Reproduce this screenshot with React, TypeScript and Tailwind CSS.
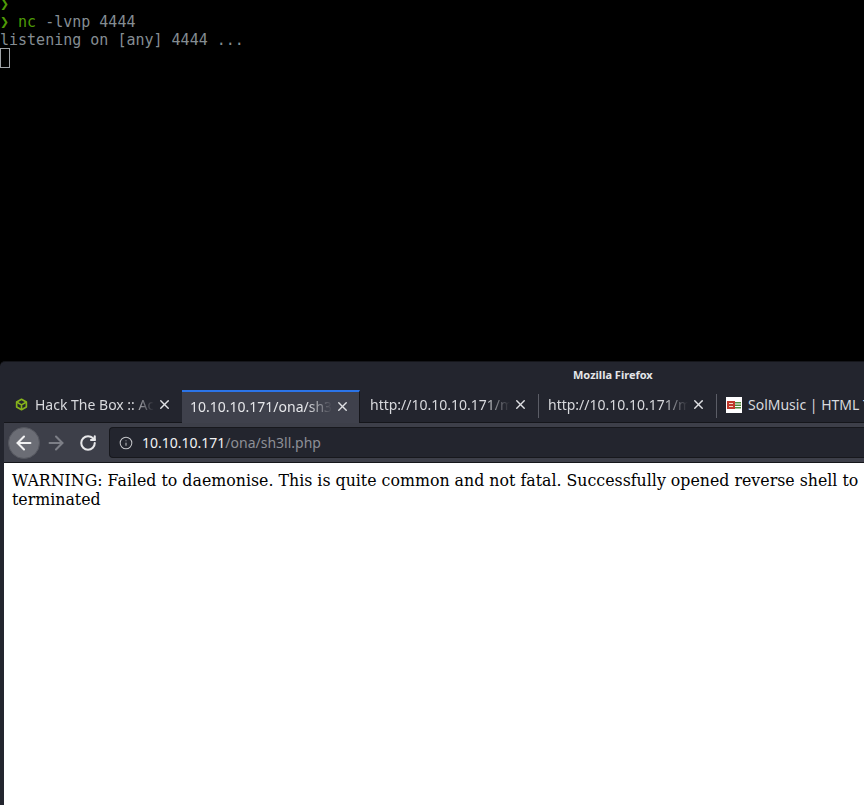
import React from 'react';
import { ArrowLeft, ArrowRight, RotateCw, Info, X } from 'lucide-react';

const fade = '[mask-image:linear-gradient(to_right,black_82%,transparent_100%)]';

const Tab = ({ title, icon, active, divider }: { title: string; icon?: React.ReactNode; active?: boolean; divider?: boolean }) => (
  <div
    className={`relative z-10 flex w-[178px] shrink-0 items-center pb-[3px] text-[14px] ${
      active
        ? 'h-[33px] border-r border-t-2 border-r-[#15161b] border-t-[#2b74e8] bg-[#3f414c] pl-[8px] pr-[9px] text-[#e6e7ea]'
        : `h-[32px] pr-[10px] text-[#d8d9dd] ${icon ? 'pl-[8px]' : 'pl-[10px]'}`
    }`}
  >
    {divider && <div className="absolute left-0 top-[4px] h-[24px] w-px bg-[#5b5d66]" />}
    {icon}
    <span className={`min-w-0 flex-1 overflow-hidden whitespace-nowrap ${fade}`}>{title}</span>
    <X className="ml-[3px] size-[15px] shrink-0 text-[#e0e1e4]" strokeWidth={2.25} />
  </div>
);

export default function App() {
  return (
    <div className="flex h-[805px] w-[864px] flex-col overflow-hidden bg-black font-['Noto_Sans',sans-serif]">
      {/* terminal */}
      <div className="h-[361px] shrink-0 font-['DejaVu_Sans_Mono',monospace] text-[15px] leading-[18px] text-[#858d93]">
        <div className="-mt-[5px] font-bold text-[#4e9a06]">❯</div>
        <div className="whitespace-pre">
          <span className="font-bold text-[#4e9a06]">❯</span>
          <span className="text-[#4e9a06]"> nc</span>
          <span> -lvnp 4444</span>
        </div>
        <div className="whitespace-pre">listening on [any] 4444 ...</div>
        <div className="-mt-px h-[20px] w-[10px] border border-[#a0a4a8]" />
      </div>

      {/* firefox window */}
      <div className="flex min-h-0 flex-1 flex-col rounded-tl-[5px] border-t border-[#15161b] bg-[#23252e] pl-[4px]">
        <div className="flex h-[28px] shrink-0 items-center whitespace-nowrap pb-[2px] pl-[569px] text-[11px] font-bold text-[#e4e5e8]">
          Mozilla Firefox
        </div>
        <div className="flex h-[32px] shrink-0">
          <Tab
            title="Hack The Box :: Academy"
            icon={
              <span className="ml-[3px] mr-[7px] flex size-[13px] shrink-0 items-center justify-center">
                <svg viewBox="0 0 16 16" className="size-[13px]" fill="none" stroke="#86b31c" strokeWidth="2" strokeLinejoin="round">
                  <path d="M8 1.5 14 5v6l-6 3.5L2 11V5z" />
                  <path d="M2 5l6 3.5L14 5M8 8.5v6" />
                </svg>
              </span>
            }
          />
          <Tab title="10.10.10.171/ona/sh3ll.php" active />
          <Tab title="http://10.10.10.171/marga" />
          <Tab title="http://10.10.10.171/marga" divider />
          <div className="relative flex h-[32px] flex-1 items-center whitespace-nowrap pb-[3px] pl-[10px] text-[14px] text-[#d8d9dd]">
            <div className="absolute left-0 top-[4px] h-[24px] w-px bg-[#5b5d66]" />
            <svg viewBox="0 0 16 16" className="mr-[6px] size-[16px] shrink-0">
              <rect width="16" height="16" fill="#fff" />
              <rect x="1" y="4" width="8" height="8" fill="#c0392b" />
              <rect x="9" y="5" width="6" height="1.5" fill="#4f8a3c" />
              <rect x="9" y="7.5" width="6" height="1.5" fill="#4f8a3c" />
              <rect x="9" y="10" width="6" height="1.5" fill="#4f8a3c" />
              <rect x="3" y="6" width="4" height="1" fill="#f3d9c9" />
              <rect x="3" y="9" width="4" height="1" fill="#f3d9c9" />
            </svg>
            SolMusic | HTML Template
          </div>
        </div>
        {/* toolbar */}
        <div className="flex h-[41px] shrink-0 items-center border-b border-t border-[#15161b] bg-[#3d3f49] pl-[4px]">
          <div className="flex size-[32px] shrink-0 items-center justify-center rounded-full border border-[#55575f] bg-[#6b6d75]">
            <ArrowLeft className="size-[22px] text-[#f2f2f3]" strokeWidth={2.25} />
          </div>
          <ArrowRight className="ml-[5px] size-[22px] shrink-0 text-[#7d7f87]" strokeWidth={2.25} />
          <RotateCw className="ml-[12px] size-[18px] shrink-0 text-[#e8e8ea]" strokeWidth={2.75} />
          <div className="ml-[12px] flex h-[31px] flex-1 items-center rounded-l-[4px] border border-r-0 border-[#17181d] bg-[#23252e] pl-[9px] text-[14px]">
            <Info className="size-[14px] shrink-0 text-[#c4c5c9]" strokeWidth={1.75} />
            <span className="ml-[9px] text-[#f1f1f3]">10.10.10.171</span>
            <span className="text-[#8d8f96]">/ona/sh3ll.php</span>
          </div>
        </div>
        <div className="flex-1 overflow-hidden bg-white pl-[8px] pt-[8px] font-['DejaVu_Serif',serif] text-[15.8px] leading-[19px] text-black">
          <div className="whitespace-nowrap">WARNING: Failed to daemonise. This is quite common and not fatal. Successfully opened reverse shell to 10.10.14.5:4444</div>
          <div>terminated</div>
        </div>
      </div>
    </div>
  );
}
